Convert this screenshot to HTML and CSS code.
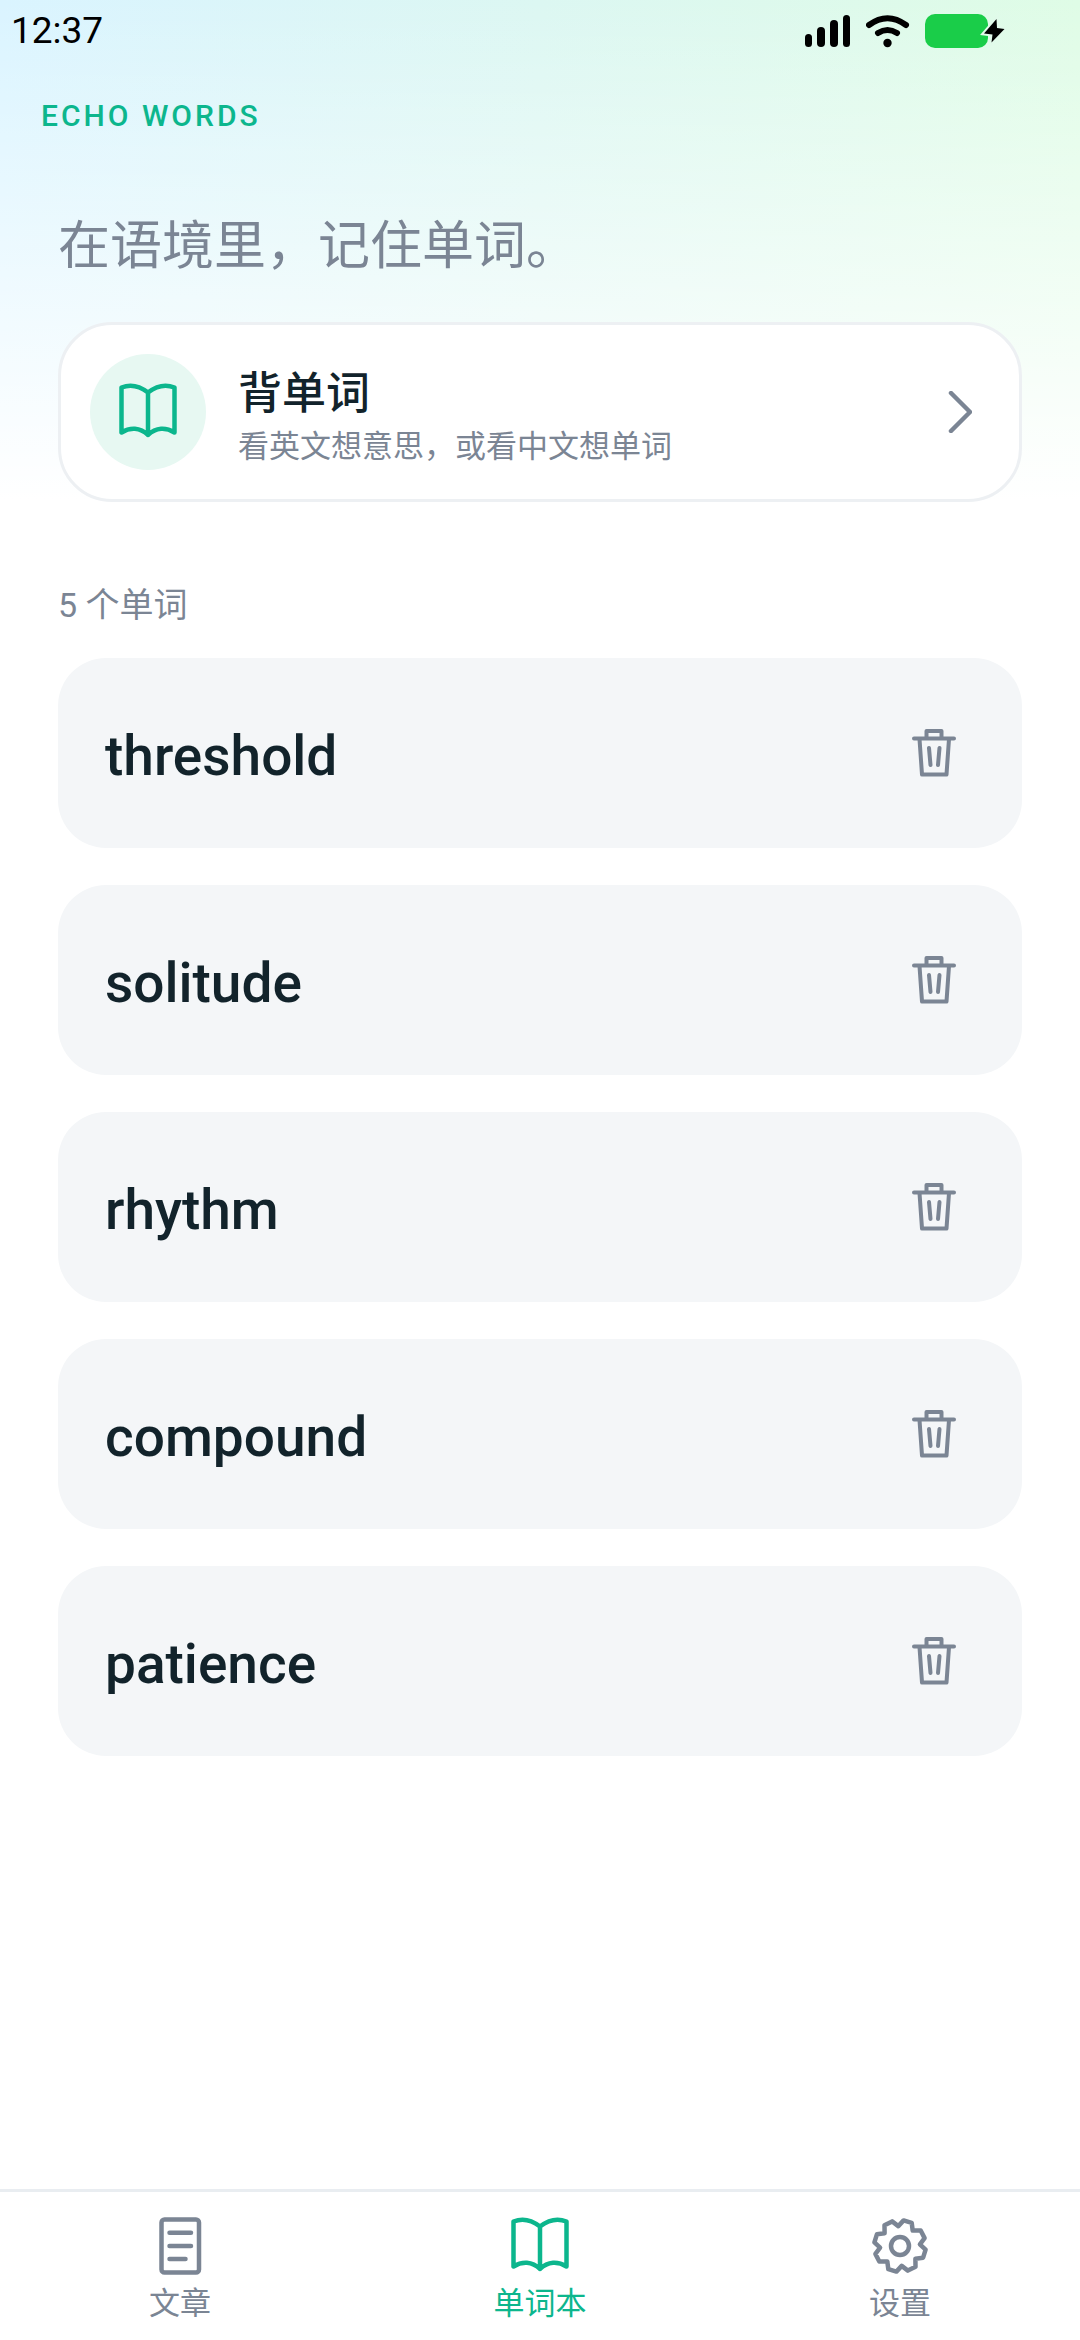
FILE: index.html
```html
<!DOCTYPE html>
<html lang="zh-CN">
  <head>
    <meta charset="UTF-8" />
    <meta name="viewport" content="width=device-width, initial-scale=1.0" />
    <title>Echo Words</title>
    <link rel="stylesheet" href="styles.css">
  </head>
  <body>
    <svg class="sprite" aria-hidden="true">
      <symbol id="icon-book" viewBox="0 0 58 58">
        <path d="M2.5 4.5C11 1 20 2.5 29 9.5C38 2.5 47 1 55.5 4.5V49.5C47 44 37 44 29 52C21 44 11 44 2.5 49.5ZM29 9.5V52" />
      </symbol>
      <symbol id="icon-trash" viewBox="0 0 44 48">
        <path d="M2 9.5H42M14.5 9V2H29.5V9M7.5 10L10 45.5H34.5L37 10M17 19L18.5 36M27.5 19L26 36" />
      </symbol>
    </svg>

    <div class="status">
      <span class="time">12:37</span>
      <div class="status-icons">
        <svg width="46" height="36" viewBox="0 0 46 36">
          <rect x="0" y="21" width="7" height="13" rx="3.5" />
          <rect x="12" y="14" width="8" height="20" rx="4" />
          <rect x="25" y="7" width="8" height="27" rx="4" />
          <rect x="38" y="2" width="7" height="32" rx="3.5" />
        </svg>
        <svg width="44" height="36" viewBox="0 0 44 36">
          <path class="wave" d="M3 12Q21.5 -1.5 40 12M12 20Q21.5 14 31 20" />
          <circle cx="21.5" cy="30" r="4.2" />
        </svg>
        <svg width="81" height="36" viewBox="0 0 81 36">
          <rect class="battery" x="0" y="1" width="63" height="34" rx="10" />
          <path class="bolt" d="M71.5 6L59 20.5L67.5 21.5L66.5 29.5L79.5 16L72 15Z" />
        </svg>
      </div>
    </div>

    <header class="brand">ECHO WORDS</header>

    <main>
      <h1>在语境里，记住单词。</h1>

      <a class="study" href="#study">
        <span class="study-icon">
          <svg class="icon" width="58" height="58"><use href="#icon-book" /></svg>
        </span>
        <span class="study-text">
          <strong>背单词</strong>
          <small>看英文想意思，或看中文想单词</small>
        </span>
        <svg class="icon arrow" width="24" height="42" viewBox="0 0 24 42">
          <path d="M3 2L22 21L3 40" />
        </svg>
      </a>

      <p class="count">5 个单词</p>

      <ul class="words">
        <li>
          <span>threshold</span>
          <button type="button" aria-label="删除 threshold"><svg class="icon" width="44" height="48"><use href="#icon-trash" /></svg></button>
        </li>
        <li>
          <span>solitude</span>
          <button type="button" aria-label="删除 solitude"><svg class="icon" width="44" height="48"><use href="#icon-trash" /></svg></button>
        </li>
        <li>
          <span>rhythm</span>
          <button type="button" aria-label="删除 rhythm"><svg class="icon" width="44" height="48"><use href="#icon-trash" /></svg></button>
        </li>
        <li>
          <span>compound</span>
          <button type="button" aria-label="删除 compound"><svg class="icon" width="44" height="48"><use href="#icon-trash" /></svg></button>
        </li>
        <li>
          <span>patience</span>
          <button type="button" aria-label="删除 patience"><svg class="icon" width="44" height="48"><use href="#icon-trash" /></svg></button>
        </li>
      </ul>
    </main>

    <nav class="tabs">
      <a href="#articles">
        <svg class="icon" width="58" height="58" viewBox="0 0 58 58">
          <rect x="10.5" y="2.5" width="37.5" height="53" rx="3" />
          <path d="M18.5 15.7H40M18.5 29H40M18.5 42H34.5" />
        </svg>
        <span>文章</span>
      </a>
      <a class="active" href="#words" aria-current="page">
        <svg class="icon" width="58" height="58"><use href="#icon-book" /></svg>
        <span>单词本</span>
      </a>
      <a href="#settings">
        <svg class="icon" width="58" height="58" viewBox="0 0 58 58">
          <path d="M27.3 9.1L32.6 3.4L40.7 5.9L41.7 13.6L49.7 13.5L53.6 21.1L48.9 27.3L54.6 32.6L52.1 40.7L44.4 41.7L44.5 49.7L36.9 53.6L30.7 48.9L25.4 54.6L17.3 52.1L16.3 44.4L8.3 44.5L4.4 36.9L9.1 30.7L3.4 25.4L5.9 17.3L13.6 16.3L13.5 8.3L21.1 4.4Z" />
          <circle cx="29" cy="29" r="9" />
        </svg>
        <span>设置</span>
      </a>
    </nav>
  </body>
</html>
```

FILE: styles.css
```css
* {
  margin: 0;
  padding: 0;
  box-sizing: border-box;
}
a {
  color: inherit;
  text-decoration: none;
}
li {
  list-style-type: none;
}
svg {
  display: block;
  flex: none;
}
body {
  display: flex;
  flex-direction: column;
  min-height: 100vh;
  background: linear-gradient(to bottom, rgba(255, 255, 255, 0), #fff) 0 0 / 100% 500px no-repeat,
    linear-gradient(to right, #daf4ff, #dcf7f2 50%, #dffce6) 0 0 / 100% 500px no-repeat,
    #fff;
  color: #12232b;
  font-family: Roboto, "Noto Sans CJK SC", sans-serif;
}
.sprite {
  position: absolute;
  width: 0;
  height: 0;
}
.icon {
  fill: none;
  stroke: currentColor;
  stroke-width: 4.5;
  stroke-linecap: round;
  stroke-linejoin: round;
}

/* status bar */
.status {
  display: flex;
  justify-content: space-between;
  align-items: center;
  height: 62px;
  padding: 0 74px 0 11px;
  color: #000;
}
.time {
  font-size: 37px;
  line-height: 44px;
}
.status-icons {
  display: flex;
  gap: 15px;
}
.wave {
  fill: none;
  stroke: #000;
  stroke-width: 6;
  stroke-linecap: round;
}
.battery {
  fill: #1acd49;
}
.bolt {
  stroke: #e1faea;
  stroke-width: 4;
  paint-order: stroke;
}

.brand {
  padding: 36px 41px 0;
  color: #0cb68d;
  font-size: 30px;
  font-weight: 500;
  line-height: 36px;
  letter-spacing: 3px;
}
main {
  flex: 1;
  padding: 70px 58px 48px;
}
h1 {
  color: #7b8594;
  font-family: "Noto Sans CJK SC", sans-serif;
  font-size: 52px;
  font-weight: 400;
  line-height: 76px;
}

/* study entry */
.study {
  display: flex;
  align-items: center;
  gap: 32px;
  margin-top: 42px;
  padding: 29px 47px 29px 29px;
  border: 3px solid #edf0f3;
  border-radius: 54px;
  background: #fff;
}
.study-icon {
  display: flex;
  justify-content: center;
  align-items: center;
  width: 116px;
  height: 116px;
  border-radius: 50%;
  background: #e7f8f2;
  color: #0cb68d;
}
.study-text {
  display: flex;
  flex: 1;
  flex-direction: column;
  gap: 2px;
  padding-top: 2px;
  font-family: "Noto Sans CJK SC", sans-serif;
}
.study-text strong {
  font-size: 44px;
  font-weight: 500;
  line-height: 60px;
}
.study-text small {
  color: #7b8594;
  font-size: 31px;
  line-height: 44px;
}
.arrow {
  color: #7b8594;
}

/* word list */
.count {
  margin: 78px 0 28px;
  color: #7b8594;
  font-size: 34px;
  line-height: 50px;
}
.words {
  display: flex;
  flex-direction: column;
  gap: 37px;
}
.words li {
  display: flex;
  justify-content: space-between;
  align-items: center;
  padding: 51px 46px 51px 47px;
  border-radius: 48px;
  background: #f4f6f8;
}
.words span {
  padding-top: 6px;
  font-size: 55px;
  font-weight: 500;
  line-height: 76px;
}
.words button {
  padding: 20px;
  border: none;
  background: none;
  color: #7b8594;
  cursor: pointer;
}
.words .icon {
  stroke-width: 4;
}

/* bottom tabs */
.tabs {
  display: flex;
  padding: 25px 0 17px;
  border-top: 3px solid #e9edf1;
  background: #fff;
}
.tabs a {
  display: flex;
  flex: 1;
  flex-direction: column;
  align-items: center;
  gap: 4px;
  color: #7b8594;
  font-family: "Noto Sans CJK SC", sans-serif;
  font-size: 31px;
  line-height: 44px;
}
.tabs .active {
  color: #0cb68d;
}
```
